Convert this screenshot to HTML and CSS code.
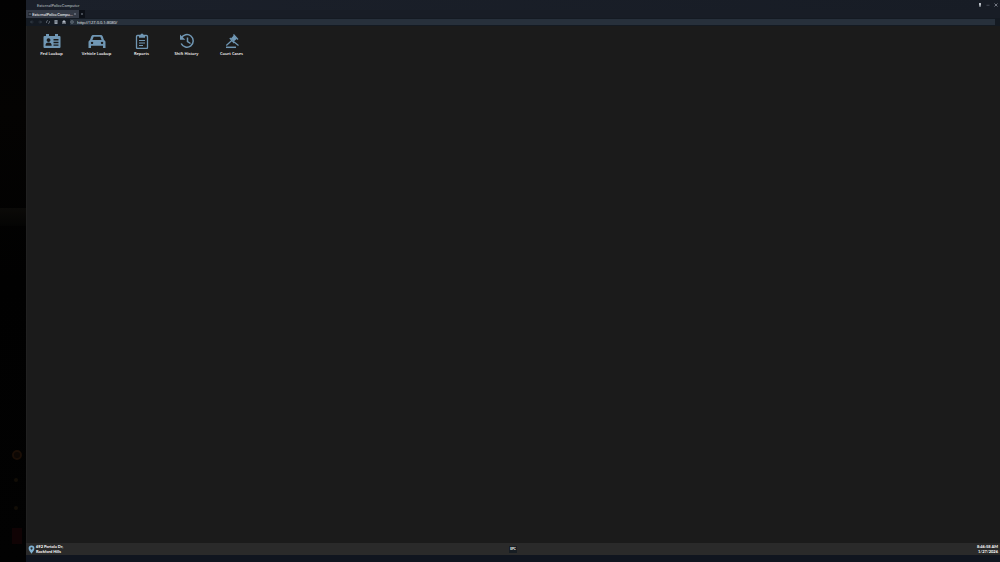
FILE: index.html
```
<!DOCTYPE html>
<html lang="en">
  <head>
    <meta charset="utf-8" />
    <meta name="viewport" content="width=device-width, initial-scale=1" />
    <title>ExternalPoliceComputer</title>
    <link rel="stylesheet" href="styles.css">
  </head>
  <body>
    <div class="backdrop">
      <span class="ledge"></span>
      <span class="glow lamp"></span>
      <span class="glow dial"></span>
      <span class="glow dial low"></span>
      <span class="glow red"></span>
    </div>
    <div class="window">
      <header class="titleBar">
        <span class="title">ExternalPoliceComputer</span>
        <div class="windowButtons">
          <button aria-label="Pin"><svg viewBox="0 0 8 8"><path d="M2 0h4v5H5v3H3V5H2z" fill="#b8bdc4" /></svg></button>
          <button aria-label="Minimize"><svg viewBox="0 0 8 8"><path d="M1 4.5h6" stroke="#727985" /></svg></button>
          <button aria-label="Close"><svg viewBox="0 0 8 8"><path d="M1 1l6 6M7 1L1 7" stroke="#a2a8b1" stroke-width="1.3" /></svg></button>
        </div>
      </header>
      <nav class="tabs">
        <div class="tab">
          <svg viewBox="0 0 8 8"><rect y="1" width="8" height="6" rx="1" fill="#10151d" /><path d="M1 4h6" stroke="#a5b0bd" stroke-width="1.5" /></svg>
          <a href="#">ExternalPoliceCompu...</a>
          <button aria-label="Close tab"><svg viewBox="0 0 8 8"><path d="M2 2l4 4M6 2L2 6" stroke="#8a93a0" /></svg></button>
        </div>
        <button class="newTab" aria-label="New tab"><svg viewBox="0 0 8 8"><path d="M4 2v4M2 4h4" stroke="#9199a4" /></svg></button>
      </nav>
      <form class="toolBar">
        <button type="button" aria-label="Back"><svg viewBox="0 0 8 8"><path d="M7 4H1M4 1L1 4l3 3" stroke="#4b5460" fill="none" /></svg></button>
        <button type="button" aria-label="Forward"><svg viewBox="0 0 8 8"><path d="M1 4h6M4 1l3 3-3 3" stroke="#4b5460" fill="none" /></svg></button>
        <button type="button" aria-label="Reload"><svg viewBox="0 0 8 8"><path d="M1 6V4a3 3 0 0 1 3-3M7 2v2a3 3 0 0 1-3 3" stroke="#9aa2ae" fill="none" /></svg></button>
        <button type="button" aria-label="Bookmarks"><svg viewBox="0 0 8 8"><path d="M1 0h6v8H1z" fill="#949da8" /><path d="M2 2h4M2 4h4" stroke="#515a66" /></svg></button>
        <button type="button" aria-label="Home"><svg viewBox="0 0 8 8"><path d="M4 0l4 4H7v4H5V5H3v3H1V4H0z" fill="#b4bbc5" /></svg></button>
        <div class="addressBar">
          <svg viewBox="0 0 8 8"><circle cx="4" cy="4" r="3" fill="none" stroke="#77808c" /><path d="M1 4h6M4 1v6" stroke="#77808c" /></svg>
          <input type="text" aria-label="Address" value="http://127.0.0.1:8080/" />
        </div>
      </form>
      <main class="desktop">
        <button class="app">
          <svg viewBox="0 0 18 16"><path fill="#7097b4" fill-rule="evenodd" d="M1.500 3H3V1h3v2h6V1h3v2h1.500a1 1 0 0 1 1 1v10a1 1 0 0 1-1 1h-15a1 1 0 0 1-1-1V4a1 1 0 0 1 1-1zM5.500 5.200a1.900 1.900 0 1 0 .1 0zM2.500 12.800h6.200c0-2.200-1-3.300-3.100-3.300s-3.100 1.100-3.100 3.300zM10.500 6v1.500h5V6zM10.500 8.800v1.400h5V8.800zM10.500 11.500v1.300h5v-1.300z" /></svg>
          Ped Lookup
        </button>
        <button class="app">
          <svg viewBox="0 0 18 16"><path fill="#7097b4" fill-rule="evenodd" d="M5.500 2h7c1.300 0 2 .6 2.300 1.500L16 7c1 .5 1.500 1.200 1.500 2.200V15H15v-2.200H3V15H.5V9.200C.5 8.200 1 7.500 2 7l1.200-3.500C3.500 2.600 4.200 2 5.500 2zm.2 1.800L4.400 6.900h9.200l-1.300-3.100zM4 8.700a1.200 1.200 0 1 0 .1 0zM14 8.700a1.200 1.200 0 1 0 .1 0z" /></svg>
          Vehicle Lookup
        </button>
        <button class="app">
          <svg viewBox="0 0 18 16"><rect x="3.500" y="2.500" width="11" height="13" rx="1" fill="none" stroke="#7097b4" stroke-width="1.300" /><path d="M6 4.800V2h1.500a1.500 1.500 0 0 1 3 0H12v2.800z" fill="#7097b4" /><path d="M6 7.500h6M6 10h6M6 12.500h4" stroke="#7097b4" /></svg>
          Reports
        </button>
        <button class="app">
          <svg viewBox="0 0 18 16"><path d="M3.300 5a6.300 6.300 0 1 1-.1 5.500M9.500 4.500v4l3 2" fill="none" stroke="#7097b4" stroke-width="1.500" /><path d="M2 1.500v5.300h5.300z" fill="#7097b4" /></svg>
          Shift History
        </button>
        <button class="app">
          <svg viewBox="0 0 18 16"><path d="M7.800 5.500L11 2.300l3 3.500-3.300 2.700z" fill="#7097b4" /><path d="M6.800 5l4.400 5M10.500 1.500L15 6.500M9.300 7l-6 5.500M10.500 8.500l5 4" stroke="#7097b4" stroke-width="1.200" /><path d="M3 14.300h10" stroke="#7097b4" stroke-width="1.500" /></svg>
          Court Cases
        </button>
      </main>
      <footer class="taskBar">
        <div class="location">
          <svg viewBox="0 0 8 10"><path fill="#81b3d4" fill-rule="evenodd" d="M4 .5a3.300 3.300 0 0 1 3.300 3.300C7.300 6 5 8 4 9.800 3 8 .7 6 .7 3.800A3.300 3.300 0 0 1 4 .5zm0 2a1.200 1.200 0 1 0 .1 0z" /></svg>
          <p>692 Portola Dr,<br />Rockford Hills</p>
        </div>
        <button class="epc">EPC</button>
        <p class="clock">8:46:58 AM<br />1/27/2026</p>
      </footer>
      <div class="windowEdge"></div>
    </div>
  </body>
</html>
```
FILE: styles.css
```
* {
  box-sizing: border-box;
}

body {
  margin: 0;
  height: 100vh;
  display: flex;
  overflow: hidden;
  background: #000;
  color: #f2f2f2;
  font: 4px/5px "Open Sans", sans-serif;
}

p {
  margin: 0;
}

svg {
  display: block;
  flex: none;
}

button {
  padding: 0;
  border: none;
  background: none;
  color: inherit;
  font: inherit;
}

.backdrop {
  position: relative;
  width: 26px;
  background: linear-gradient(#020202, #040302 20%, #010101 50%, #020202);
}

.ledge {
  position: absolute;
  top: 37%;
  width: 100%;
  height: 18px;
  background: linear-gradient(#0b0a08, #040403);
}

.glow {
  position: absolute;
  left: 14px;
  width: 4px;
  height: 4px;
  border-radius: 50%;
  background: #120d06;
}

.lamp {
  top: 80%;
  left: 12px;
  width: 10px;
  height: 10px;
  border: 2px solid #1a0e06;
  background: #0c0704;
}

.dial {
  top: 85%;
}

.low {
  top: 90%;
}

.red {
  top: 94%;
  left: 12px;
  width: 10px;
  height: 16px;
  border-radius: 0;
  background: #100304;
}

.window {
  flex: 1;
  display: flex;
  flex-direction: column;
  background: #1b1b1b;
}

.titleBar {
  height: 10px;
  display: flex;
  align-items: center;
  justify-content: space-between;
  padding: 0 2px 0 11px;
  background: linear-gradient(90deg, #1b202a, #171c25);
  color: #bcc0c6;
  font-family: Lato, sans-serif;
}

.windowButtons {
  display: flex;
  gap: 4px;
}

.windowButtons svg {
  width: 4px;
  height: 4px;
}

.tabs {
  height: 8px;
  display: flex;
  background: #181d26;
}

.tab {
  width: 53px;
  display: flex;
  align-items: center;
  justify-content: space-between;
  padding: 0 2px;
  background: #343a46;
  font-family: Lato, sans-serif;
}

.tab a {
  color: #fff;
  text-decoration: none;
  white-space: nowrap;
}

.tab svg,
.newTab svg {
  width: 4px;
  height: 4px;
}

.newTab {
  width: 6px;
  padding: 0 1px;
  background: #0c1017;
}

.toolBar {
  height: 8px;
  display: flex;
  align-items: center;
  gap: 4px;
  padding: 0 5px 0 4px;
  background: #141a22;
}

.toolBar svg {
  width: 4px;
  height: 4px;
}

.addressBar {
  flex: 1;
  height: 6px;
  display: flex;
  align-items: center;
  gap: 3px;
  background: #27303b;
}

.addressBar input {
  flex: 1;
  height: 5px;
  padding: 0;
  border: none;
  outline: none;
  background: none;
  color: #f0f2f5;
  font: inherit;
}

.desktop {
  flex: 1;
  display: flex;
  align-items: flex-start;
  padding: 7px 2px;
  border-left: 1px solid #202020;
}

.app {
  width: 45px;
  display: flex;
  flex-direction: column;
  align-items: center;
  gap: 2px;
  color: #fff;
  font-weight: 600;
  white-space: nowrap;
}

.app svg {
  width: 18px;
  height: 16px;
}

.taskBar {
  height: 12px;
  display: grid;
  grid-template-columns: 1fr auto 1fr;
  align-items: center;
  padding: 0 2px;
  background: #2a2a2a;
  color: #fff;
  font-family: Lato, sans-serif;
  font-weight: 700;
}

.location {
  display: flex;
  align-items: center;
  gap: 1px;
}

.location svg {
  width: 7px;
  height: 9px;
}

.epc {
  width: 8px;
  height: 7px;
  background: #171d23;
  font-size: 3px;
}

.clock {
  text-align: right;
}

.windowEdge {
  height: 7px;
  background: #10151f;
}
```
